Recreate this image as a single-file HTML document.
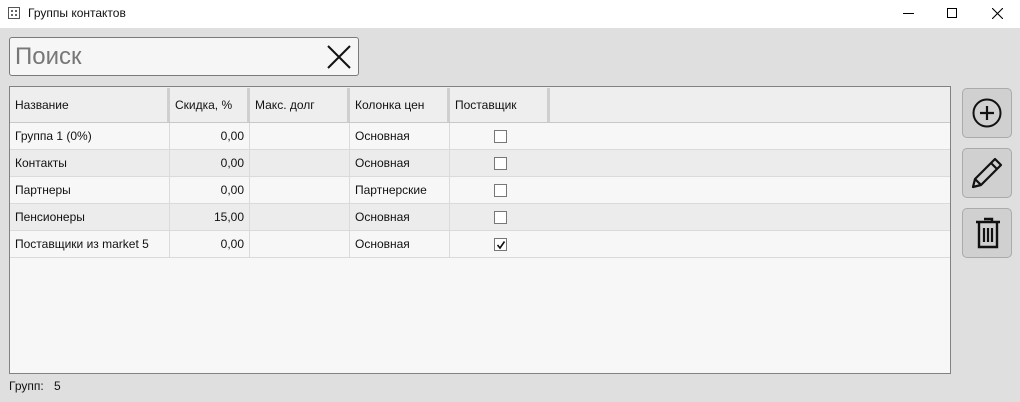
<!DOCTYPE html><html><head><meta charset="utf-8"><style>
*{margin:0;padding:0;box-sizing:border-box}
body{width:1020px;height:402px;background:#dfdfdf;font-family:"Segoe UI","Liberation Sans",sans-serif;font-size:12px;color:#111;position:relative;overflow:hidden}
.tb{position:absolute;left:0;top:0;width:1020px;height:28px;background:#fff}
.a{position:absolute}
.search{left:9px;top:37px;width:350px;height:39px;border:1px solid #7a7a7a;border-radius:3px;background:#f6f6f6}
.grid{left:9px;top:86px;width:942px;height:288px;border:1px solid #828282;background:#f7f7f7}
.hdr{position:absolute;left:0;top:0;width:940px;height:36px;background:#eeeeee;border-bottom:1px solid #c8c8c8}
.row{position:absolute;left:0;width:540px;height:27px;border-bottom:1px solid #dadada}
.cell{position:absolute;top:0;height:27px;line-height:27px;border-right:1px solid #dadada;padding:0 5px;font-size:12px}
.hs{position:absolute;top:1px;width:3px;height:34px;background:#cfcfcf}
.btn{left:962px;width:50px;height:50px;border:1px solid #aaa;border-radius:5px;background:#d0d0d0}
.cb{position:absolute;left:44px;top:7px;width:13px;height:13px;border:1px solid #777;background:#fff}
</style></head><body>
<div class="tb">
<svg class="a" style="left:8px;top:7px" width="12" height="12" viewBox="0 0 12 12"><rect x=".5" y=".5" width="11" height="11" fill="#fff" stroke="#555"/><path d="M3 3h2v2H3zM7 3h2v2H7zM3 7h2v2H3zM7 7h2v2H7z" fill="#666"/></svg>
<div class="a" style="left:28px;top:6px;font-size:12px">Группы контактов</div>
<div class="a" style="left:903px;top:13px;width:11px;height:1px;background:#000"></div>
<div class="a" style="left:947px;top:8px;width:10px;height:10px;border:1px solid #000"></div>
<svg class="a" style="left:992px;top:8px" width="11" height="11"><path d="M0 0L11 11M11 0L0 11" stroke="#000" stroke-width="1.1"/></svg>
</div>
<div class="a search"><div class="a" style="left:5px;top:5px;font-size:24px;color:#777">Поиск</div>
<svg class="a" style="left:317px;top:7px" width="24" height="24"><path d="M1 1L23 23M23 1L1 23" stroke="#111" stroke-width="2"/></svg></div>
<div class="a grid">
<div class="hdr">
<div class="a" style="left:5px;top:11px">Название</div>
<div class="a" style="left:165px;top:11px">Скидка, %</div>
<div class="a" style="left:245px;top:11px">Макс. долг</div>
<div class="a" style="left:345px;top:11px">Колонка цен</div>
<div class="a" style="left:445px;top:11px">Поставщик</div>
<div class="hs" style="left:157px"></div><div class="hs" style="left:237px"></div><div class="hs" style="left:337px"></div><div class="hs" style="left:437px"></div><div class="hs" style="left:537px"></div>
</div>
<div class="row" style="top:36px;background:#f7f7f7">
<div class="cell" style="left:0;width:160px">Группа 1 (0%)</div><div class="cell" style="left:160px;width:80px;text-align:right">0,00</div><div class="cell" style="left:240px;width:100px"></div><div class="cell" style="left:340px;width:100px">Основная</div><div class="cell" style="left:440px;width:100px"><div class="cb"></div></div></div>
<div class="row" style="top:63px;background:#ececec">
<div class="cell" style="left:0;width:160px">Контакты</div><div class="cell" style="left:160px;width:80px;text-align:right">0,00</div><div class="cell" style="left:240px;width:100px"></div><div class="cell" style="left:340px;width:100px">Основная</div><div class="cell" style="left:440px;width:100px"><div class="cb"></div></div></div>
<div class="row" style="top:90px;background:#f7f7f7">
<div class="cell" style="left:0;width:160px">Партнеры</div><div class="cell" style="left:160px;width:80px;text-align:right">0,00</div><div class="cell" style="left:240px;width:100px"></div><div class="cell" style="left:340px;width:100px">Партнерские</div><div class="cell" style="left:440px;width:100px"><div class="cb"></div></div></div>
<div class="row" style="top:117px;background:#ececec">
<div class="cell" style="left:0;width:160px">Пенсионеры</div><div class="cell" style="left:160px;width:80px;text-align:right">15,00</div><div class="cell" style="left:240px;width:100px"></div><div class="cell" style="left:340px;width:100px">Основная</div><div class="cell" style="left:440px;width:100px"><div class="cb"></div></div></div>
<div class="row" style="top:144px;background:#f7f7f7">
<div class="cell" style="left:0;width:160px">Поставщики из market 5</div><div class="cell" style="left:160px;width:80px;text-align:right">0,00</div><div class="cell" style="left:240px;width:100px"></div><div class="cell" style="left:340px;width:100px">Основная</div><div class="cell" style="left:440px;width:100px"><div class="cb"><svg style="position:absolute;left:1px;top:1px" width="10" height="10"><path d="M1.5 5L4 8L8.5 1.5" stroke="#111" stroke-width="1.6" fill="none"/></svg></div></div></div>
<div class="a" style="left:539px;top:36px;width:401px;height:27px;border-bottom:1px solid #dadada;background:#f7f7f7"></div>
<div class="a" style="left:539px;top:63px;width:401px;height:27px;border-bottom:1px solid #dadada;background:#ececec"></div>
<div class="a" style="left:539px;top:90px;width:401px;height:27px;border-bottom:1px solid #dadada;background:#f7f7f7"></div>
<div class="a" style="left:539px;top:117px;width:401px;height:27px;border-bottom:1px solid #dadada;background:#ececec"></div>
<div class="a" style="left:539px;top:144px;width:401px;height:27px;border-bottom:1px solid #dadada;background:#f7f7f7"></div>
</div>
<div class="a btn" style="top:88px"><svg class="a" style="left:9px;top:9px" width="30" height="30"><circle cx="15" cy="15" r="13.5" fill="none" stroke="#111" stroke-width="2"/><path d="M15 8v14M8 15h14" stroke="#111" stroke-width="2.2"/></svg></div>
<div class="a btn" style="top:148px"><svg class="a" style="left:7px;top:7px" width="34" height="34"><path d="M25 3l6 6L11 29l-8 2 2-8z M21 7l6 6 M5 23l6 6" fill="none" stroke="#111" stroke-width="2.2" stroke-linejoin="round"/></svg></div>
<div class="a btn" style="top:208px"><svg class="a" style="left:11px;top:8px" width="28" height="34"><path d="M10 2h8v3M2 5h24M5 5v25h18V5" fill="none" stroke="#111" stroke-width="2.4"/><path d="M10 11v14M14 11v14M18 11v14" stroke="#111" stroke-width="2.2"/></svg></div>
<div class="a" style="left:9px;top:379px">Групп:</div><div class="a" style="left:54px;top:379px">5</div>
</body></html>
